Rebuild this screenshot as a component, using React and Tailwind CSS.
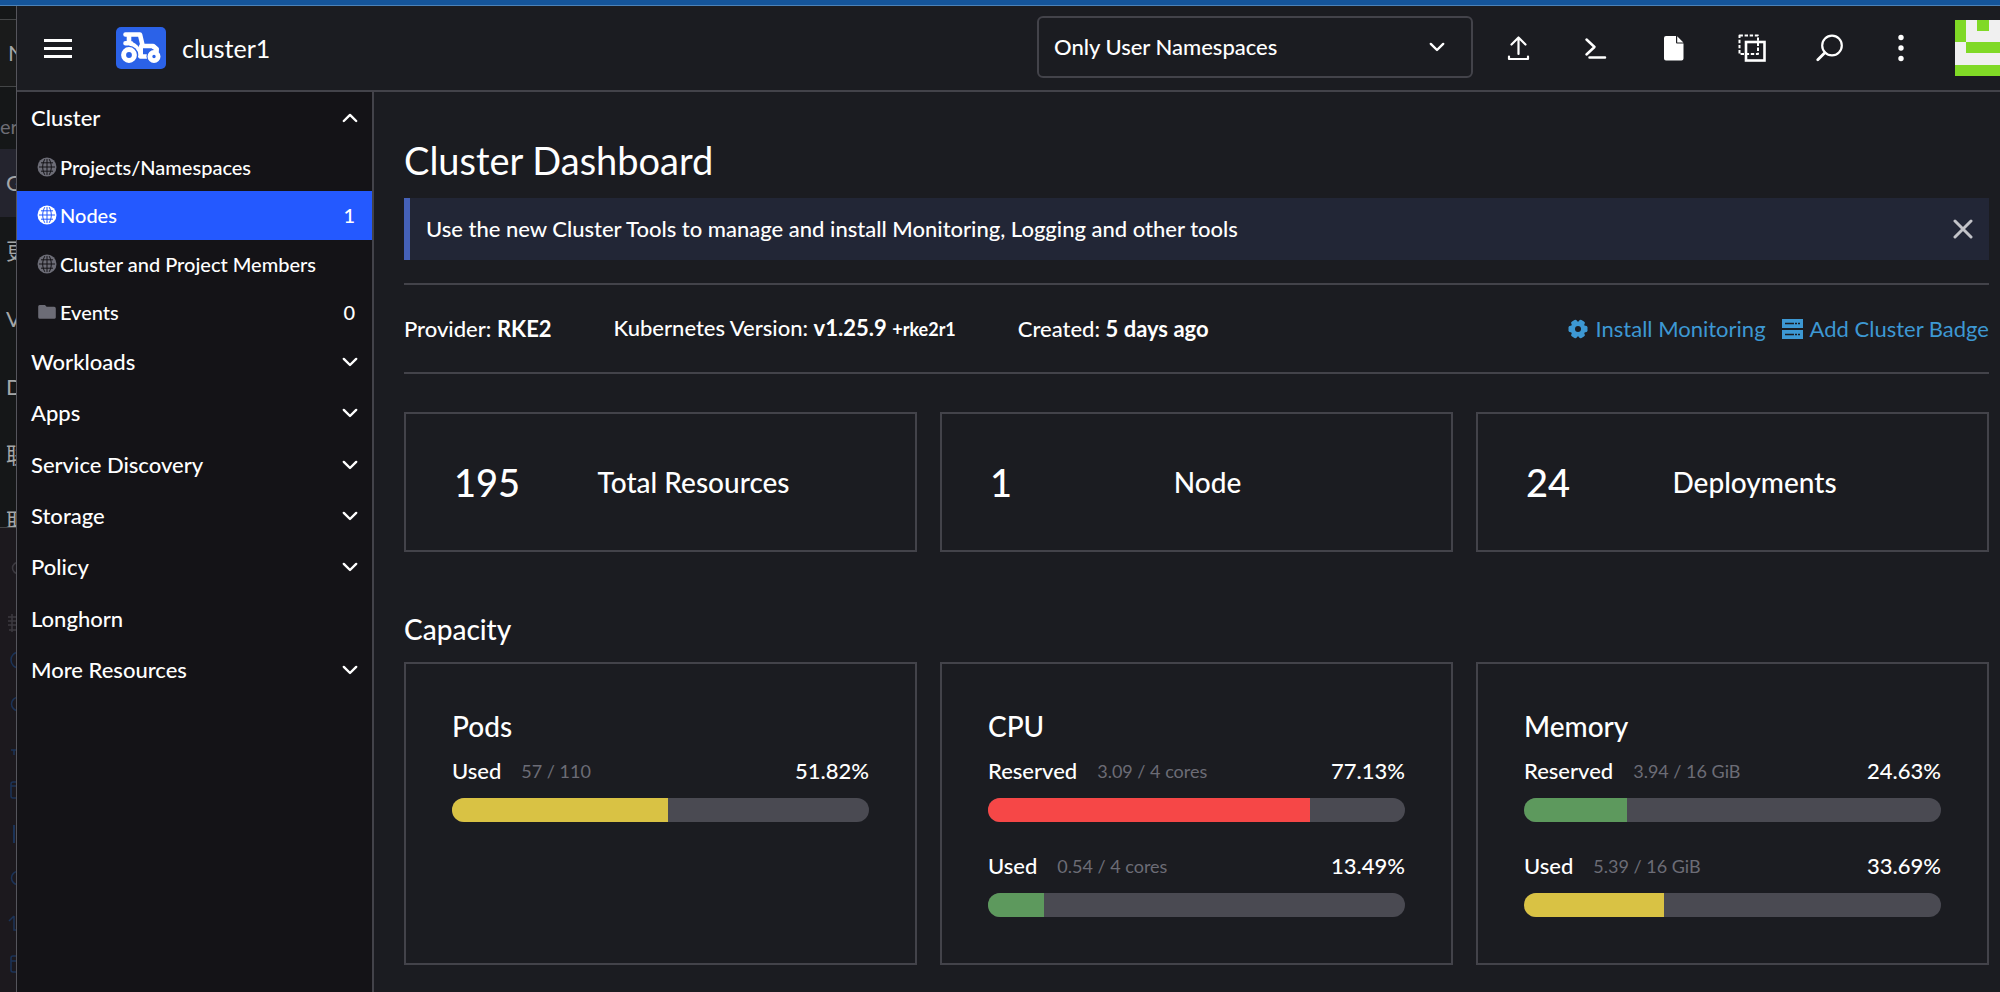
const Chevron = ({ up }) => (
  <svg viewBox="0 0 16 10" className="h-[10px] w-4 shrink-0" fill="none" stroke="currentColor" strokeWidth="2.4" strokeLinecap="round" strokeLinejoin="round" aria-hidden="true">
    <path d={up ? "M1.8 8 8 1.9 14.2 8" : "M1.8 1.9 8 8l6.2-6.1"} />
  </svg>
);

const Globe = ({ active }) => (
  <svg viewBox="0 0 20 20" className={"size-5 shrink-0 " + (active ? "text-white" : "text-[#6c6c76]")} aria-hidden="true">
    <circle cx="10" cy="10" r="9.5" fill="currentColor" />
    <g fill="none" stroke={active ? "#2459ff" : "#141317"} strokeWidth="1">
      <path d="M10 2v16M2 10h16M4 5.800h12M4 14.200h12" />
      <path d="M7.800 2.200C5 7 5 13 7.800 17.800M12.200 2.200C15 7 15 13 12.200 17.800" />
    </g>
  </svg>
);

const Folder = () => (
  <svg viewBox="0 0 20 20" className="size-5 shrink-0 text-[#6c6c76]" aria-hidden="true">
    <path fill="currentColor" d="M2.800 3h5.200l1.600 1.800h7.600a1.600 1.600 0 0 1 1.600 1.600v9a1.600 1.600 0 0 1-1.600 1.400H2.800a1.600 1.600 0 0 1-1.600-1.500V4.500A1.500 1.500 0 0 1 2.800 3z" />
  </svg>
);

const Tractor = () => (
  <svg viewBox="0 0 50 42" className="h-[42px] w-[50px] shrink-0" aria-hidden="true">
    <rect width="50" height="42" rx="5" fill="#2b62e8" />
    <g fill="none" stroke="#fff" strokeLinejoin="round" strokeLinecap="round">
      <path d="M9.500 7.500h14.500l2.700 11.500h10.500l3.300 3v6" strokeWidth="4.600" />
      <path d="M9.500 16.300h5.500M13 8v8" strokeWidth="4.600" />
      <path d="M15 17c4 1.500 7 4.500 8.500 9.500l.8 3H31" strokeWidth="4.600" />
      <path d="M25 19v9" strokeWidth="4" />
    </g>
    <circle cx="13" cy="28" r="9.300" fill="#2b62e8" />
    <circle cx="13" cy="28" r="5.400" fill="none" stroke="#fff" strokeWidth="5" />
    <circle cx="38" cy="29.500" r="7.500" fill="#2b62e8" />
    <circle cx="38" cy="29.500" r="4.100" fill="none" stroke="#fff" strokeWidth="4.800" />
    <path d="M37 19.500 40.500 22v3" fill="none" stroke="#fff" strokeWidth="4.600" strokeLinejoin="round" />
  </svg>
);

const iconProps = { viewBox: "0 0 28 28", className: "size-7", fill: "none", stroke: "currentColor", strokeLinecap: "round", strokeLinejoin: "round", "aria-hidden": true };

const tools = [
  ["Import YAML", <svg {...iconProps} strokeWidth="2.200"><path d="M14.500 20V3.500M7.500 10.500l7-7 7 7M5 22.500v2.500h19v-2.500" /></svg>],
  ["Kubectl shell", <svg {...iconProps} strokeWidth="2.500"><path d="M4.500 5.500l8 7.500-8 7.500M7.500 23.500h15.500" /></svg>],
  ["Kubeconfig file", <svg {...iconProps} strokeWidth="0"><path fill="currentColor" d="M6 2h10v6.500a1 1 0 0 0 1 1h6.500v15a2 2 0 0 1-2 2H6a2 2 0 0 1-2-2V4a2 2 0 0 1 2-2zM17.200 2.300l6.200 6.200h-6.200z" /></svg>],
  ["Copy kubeconfig", <svg {...iconProps} strokeWidth="2" strokeLinecap="butt"><rect x="1.500" y="1.500" width="18.500" height="18.500" strokeDasharray="3.400 1.700" strokeWidth="2" /><rect x="8" y="8" width="18.500" height="18.500" strokeWidth="2.600" strokeLinejoin="miter" /></svg>],
  ["Resource search", <svg {...iconProps} strokeWidth="2.200"><circle cx="16" cy="11.500" r="9.800" /><path d="M8.800 18.700 1.800 25.700" strokeWidth="2.800" /></svg>],
];

const navTop = [
  { label: "Projects/Namespaces", icon: "globe" },
  { label: "Nodes", icon: "globe", count: 1, active: true },
  { label: "Cluster and Project Members", icon: "globe" },
  { label: "Events", icon: "folder", count: 0 },
];
const groups = ["Workloads", "Apps", "Service Discovery", "Storage", "Policy", "Longhorn", "More Resources"];

const Strip = ({ className, children }) => (
  <div className={"flex shrink-0 overflow-hidden whitespace-nowrap " + className}>{children}</div>
);

function BackgroundWindow() {
  return (
    <div aria-hidden="true" className="flex w-4 shrink-0 flex-col overflow-hidden bg-[#151718] text-[#a5a7a8]">
      <Strip className="h-[13px]" />
      <Strip className="h-[68px] items-center border-y border-[#444647] bg-[#1a1b1b] pl-2">N</Strip>
      <Strip className="h-[62px] items-center pt-4 text-[20px] text-[#6d6d75]">er</Strip>
      <Strip className="h-[68px] items-center bg-[#24242e] pl-[6px]">G</Strip>
      <Strip className="h-[68px] items-center pl-[6px]">更</Strip>
      <Strip className="h-[68px] items-center pl-[6px]">V</Strip>
      <Strip className="h-[68px] items-center pl-[6px]">D</Strip>
      <Strip className="h-[68px] items-center pl-[6px]">联</Strip>
      <Strip className="h-[38px] items-start pt-[17px] pl-[6px]">取</Strip>
      <div className="grow border-t border-[#444647] bg-[#1c191e]">
        <svg viewBox="0 0 16 464" className="h-[464px] w-4" fill="none" stroke="#1b3358" strokeWidth="1.500">
          <g stroke="#3c3a40">
            <circle cx="18" cy="40" r="5.500" />
            <path d="M8 89h8M8 93h8M8 97h8M9 102h7M12 86v18" />
          </g>
          <circle cx="19" cy="132" r="8" />
          <circle cx="18" cy="176" r="6.500" />
          <path d="M11 222h5M14 222v5" />
          <path d="M16 254h-3a2 2 0 0 0-2 2v12a2 2 0 0 0 2 2h3M11 258h5" />
          <path d="M14 297v18" strokeWidth="2" />
          <circle cx="18" cy="350" r="6.500" />
          <path d="M9 393l5-5M14 388v14h2" />
          <path d="M16 428h-3a2 2 0 0 0-2 2v12a2 2 0 0 0 2 2h3M11 433h5" />
        </svg>
      </div>
    </div>
  );
}

function Stat({ value, label }) {
  return (
    <section className="flex h-[140px] items-center border-2 border-[#43434a] px-12">
      <span className="text-[38px] leading-none">{value}</span>
      <span className="grow text-center text-[28px] leading-none">{label}</span>
    </section>
  );
}

function Meter({ label, amount, percent, color }) {
  return (
    <div className="flex flex-col gap-3">
      <div className="flex h-[30px] items-center">
        <span>{label}</span>
        <span className="ml-5 text-[18px] font-normal text-[#6c6c76]">{amount}</span>
        <span className="ml-auto">{percent}%</span>
      </div>
      <div role="progressbar" aria-label={label} aria-valuenow={percent} className="h-6 overflow-hidden rounded-full bg-[#4a4a52]">
        <div className={"h-full " + color} style={{ width: percent + "%" }} />
      </div>
    </div>
  );
}

function CapacityCard({ title, meters }) {
  return (
    <section className="flex h-[303px] flex-col border-2 border-[#43434a] px-[46px] pt-[44px]">
      <h3 className="text-[28px] leading-[36px]">{title}</h3>
      <div className="mt-3 flex flex-col gap-[29px]">
        {meters.map((m) => <Meter key={m.label} {...m} />)}
      </div>
    </section>
  );
}

export default function App() {
  return (
    <div className="flex min-h-screen flex-col overflow-hidden bg-[#1b1c21] font-['Lato','Noto_Sans_CJK_SC',sans-serif] text-[22px] leading-[30px] text-white">
      <div className="h-[6px] border-b border-[#4c82b8] bg-[#15559a]" />
      <div className="flex grow">
        <BackgroundWindow />
        <div className="flex min-w-0 grow flex-col border-l border-[#55555c] font-medium">
          <header className="flex h-[86px] items-center border-b-2 border-[#43434a]">
            <button type="button" aria-label="Menu" className="ml-[27px] flex w-7 flex-col gap-[5px]">
              <span className="h-[3px] bg-white" />
              <span className="h-[3px] bg-white" />
              <span className="h-[3px] bg-white" />
            </button>
            <a href="#cluster" className="ml-[44px] flex items-center gap-4 text-[25px] font-normal"><Tractor />cluster1</a>
            <div className="mb-[3px] ml-auto flex h-[62px] w-[436px] items-center rounded-md border-2 border-[#43434a] pr-[26px]">
              <select aria-label="Namespace filter" className="h-full grow appearance-none bg-transparent pl-[15px] outline-none">
                <option>Only User Namespaces</option>
              </select>
              <Chevron />
            </div>
            <div className="ml-[31px] flex items-center gap-[50px]">
              {tools.map(([name, icon]) => <button key={name} type="button" aria-label={name}>{icon}</button>)}
            </div>
            <button type="button" aria-label="More actions" className="ml-[54px]">
              <svg viewBox="0 0 6 28" className="h-7 w-[6px]" fill="currentColor"><circle cx="3" cy="3.500" r="2.700" /><circle cx="3" cy="14" r="2.700" /><circle cx="3" cy="24.500" r="2.700" /></svg>
            </button>
            <button type="button" aria-label="User" className="ml-[51px]">
              <svg viewBox="0 0 45 56" className="h-14 w-[45px]" shapeRendering="crispEdges">
                <path fill="#f0f0f0" d="M0 0h45v56H0z" />
                <path fill="#80d926" d="M0 0h11v22H0zM22 0h12v11H22zM11 22h34v11H11zM0 45h45v11H0z" />
              </svg>
            </button>
          </header>
          <div className="flex grow">
            <nav className="flex w-[357px] shrink-0 flex-col border-r-2 border-[#43434a] bg-[#141317]">
              <button type="button" className="flex h-[51px] items-center justify-between px-3.5 text-left">Cluster<Chevron up /></button>
              <div className="grid h-[193px] grid-rows-4">
                {navTop.map((n) => (
                  <a key={n.label} href="#nav" className={"flex items-center gap-[3px] pr-[17px] pl-5 text-[20px] " + (n.active ? "bg-[#2459ff]" : "")}>
                    {n.icon === "globe" ? <Globe active={n.active} /> : <Folder />}
                    {n.label}
                    <span className="ml-auto">{n.count}</span>
                  </a>
                ))}
              </div>
              <div className="grid h-[360px] grid-rows-7">
                {groups.map((g) => (
                  <button key={g} type="button" className="flex items-center justify-between px-3.5 text-left">
                    {g}{g !== "Longhorn" && <Chevron />}
                  </button>
                ))}
              </div>
            </nav>
            <main className="flex min-w-0 grow flex-col pr-[11px] pl-[30px]">
              <h1 className="mt-[46px] text-[38px] leading-[44px] font-normal">Cluster Dashboard</h1>
              <div className="mt-4 flex h-[62px] items-center justify-between border-l-6 border-[#4561b8] bg-[#222636] px-4">
                <p>Use the new Cluster Tools to manage and install Monitoring, Logging and other tools</p>
                <button type="button" aria-label="Dismiss">
                  <svg viewBox="0 0 20 20" className="size-5 text-[#c2c3c8]" stroke="currentColor" strokeWidth="3" strokeLinecap="round"><path d="m2 2 16 16M18 2 2 18" /></svg>
                </button>
              </div>
              <div className="mt-[23px] flex h-[91px] items-center border-y-2 border-[#43434a]">
                <p>Provider: <b>RKE2</b></p>
                <p className="ml-[62px]">Kubernetes Version: <b>v1.25.9</b> <b className="text-[18px]">+rke2r1</b></p>
                <p className="ml-[62px]">Created: <b>5 days ago</b></p>
                <div className="ml-auto flex gap-4 font-normal text-[#3d98d3]">
                  <a href="#monitoring" className="flex items-center gap-2">
                    <svg viewBox="0 0 20 20" className="size-5" fill="currentColor" aria-hidden="true">
                      <circle cx="10" cy="10" r="7.600" />
                      <rect x="0.500" y="6.800" width="19" height="6.400" rx="1.800" />
                      <rect x="0.500" y="6.800" width="19" height="6.400" rx="1.800" transform="rotate(60 10 10)" />
                      <rect x="0.500" y="6.800" width="19" height="6.400" rx="1.800" transform="rotate(120 10 10)" />
                      <circle cx="10" cy="10" r="3" fill="#1b1c21" />
                    </svg>
                    Install Monitoring
                  </a>
                  <a href="#badge" className="flex items-center gap-[7px]">
                    <svg viewBox="0 0 21 20" className="h-5 w-[21px]" aria-hidden="true"><path fill="currentColor" fillRule="evenodd" d="M0 0h21v9H0zM3 3.800v1.400h9v-1.400zM13 3.800v1.400h2v-1.400zM16 3.800v1.400h2v-1.400zM0 11h21v9H0zM3 14.800v1.400h9v-1.400zM13 14.800v1.400h2v-1.400zM16 14.800v1.400h2v-1.400z" /></svg>
                    Add Cluster Badge
                  </a>
                </div>
              </div>
              <div className="mt-[38px] grid grid-cols-3 gap-[23px]">
                <Stat value="195" label="Total Resources" />
                <Stat value="1" label="Node" />
                <Stat value="24" label="Deployments" />
              </div>
              <h2 className="mt-[59px] text-[28px] leading-[36px]">Capacity</h2>
              <div className="mt-[15px] grid grid-cols-3 gap-[23px]">
                <CapacityCard title="Pods" meters={[{ label: "Used", amount: "57 / 110", percent: "51.82", color: "bg-[#d9c244]" }]} />
                <CapacityCard title="CPU" meters={[{ label: "Reserved", amount: "3.09 / 4 cores", percent: "77.13", color: "bg-[#f64747]" }, { label: "Used", amount: "0.54 / 4 cores", percent: "13.49", color: "bg-[#5d995d]" }]} />
                <CapacityCard title="Memory" meters={[{ label: "Reserved", amount: "3.94 / 16 GiB", percent: "24.63", color: "bg-[#5d995d]" }, { label: "Used", amount: "5.39 / 16 GiB", percent: "33.69", color: "bg-[#d9c244]" }]} />
              </div>
            </main>
          </div>
        </div>
      </div>
    </div>
  );
}
